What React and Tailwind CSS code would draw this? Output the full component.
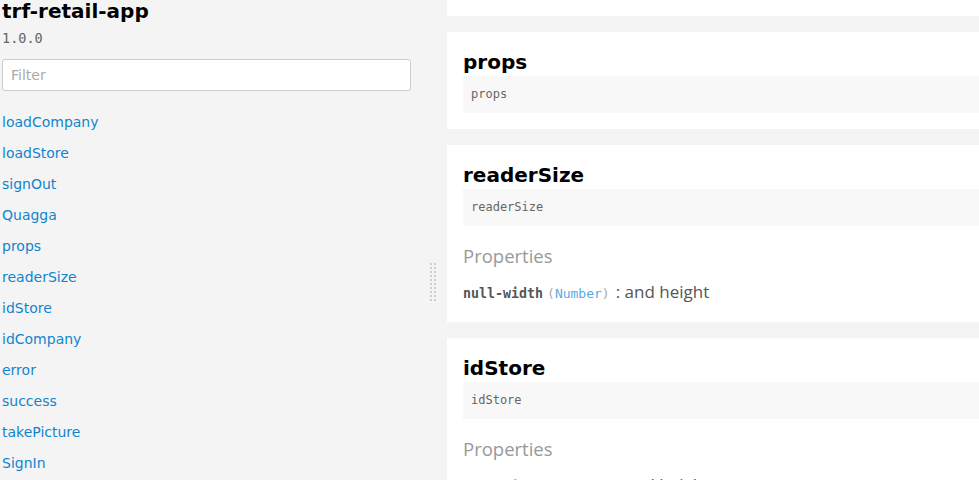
import React from 'react';

const links = [
  'loadCompany',
  'loadStore',
  'signOut',
  'Quagga',
  'props',
  'readerSize',
  'idStore',
  'idCompany',
  'error',
  'success',
  'takePicture',
  'SignIn',
];

const sans = "font-['DejaVu_Sans',sans-serif]";
const mono = "font-['DejaVu_Sans_Mono',monospace]";
const body = "font-['Open_Sans',sans-serif]";

function Member({ name, props }) {
  return (
    <section className="shrink-0 bg-white px-4 pt-4 pb-4">
      <h3 className={`${sans} text-[20px] font-bold leading-[28px] text-black`}>{name}</h3>
      <div className={`${mono} bg-[#f8f8f8] px-2 text-[12px] leading-[37px] text-[#666]`}>{name}</div>
      {props && (
        <div>
          <div className={`${body} mt-[17px] text-[18.5px] leading-[26px] text-[#999]`}>Properties</div>
          <div className="mt-[10px] mb-[1px] flex items-baseline">
            <span className={`${mono} text-[13.3px] font-bold text-[#555]`}>null-width</span>
            <span className={`${mono} ml-[4px] text-[13px] text-[#aaa]`}>
              (<span className="text-[#5aa9e6]">Number</span>)
            </span>
            <span className={`${body} ml-[6px] text-[17px] text-[#555]`}>: and height</span>
          </div>
        </div>
      )}
    </section>
  );
}

export default function App() {
  return (
    <div className="flex h-[480px] w-[979px] overflow-hidden bg-[#f4f4f4]">
      <aside className="w-[412px] shrink-0 pl-[2px]">
        <h1 className={`${sans} -mt-[1px] text-[20px] font-bold leading-[24px] text-black`}>trf-retail-app</h1>
        <div className={`${mono} mt-[5px] text-[13.5px] leading-[20px] text-[#666]`}>1.0.0</div>
        <input
          type="text"
          placeholder="Filter"
          className={`${sans} mt-[11px] block h-[32px] w-[409px] rounded-[3px] border border-[#ccc] bg-white px-2 text-[14px] outline-none placeholder:text-[#aaa]`}
        />
        <ul className="mt-[16px]">
          {links.map((l) => (
            <li key={l} className={`${sans} text-[14px] leading-[31px] text-[#1184ce]`}>
              {l}
            </li>
          ))}
        </ul>
      </aside>
      <div className="flex w-[35px] shrink-0 flex-col items-center pt-[263px]">
        <div className="grid grid-cols-2 gap-[2px] pl-[7px]">
          {Array.from({ length: 20 }).map((_, i) => (
            <span key={i} className="block h-[2px] w-[2px] bg-[#ccc]" />
          ))}
        </div>
      </div>
      <main className="-mt-[80px] flex w-[600px] shrink-0 flex-col gap-4">
        <section className="h-[96px] shrink-0 bg-white" />
        <Member name="props" />
        <Member name="readerSize" props />
        <Member name="idStore" props />
      </main>
    </div>
  );
}
